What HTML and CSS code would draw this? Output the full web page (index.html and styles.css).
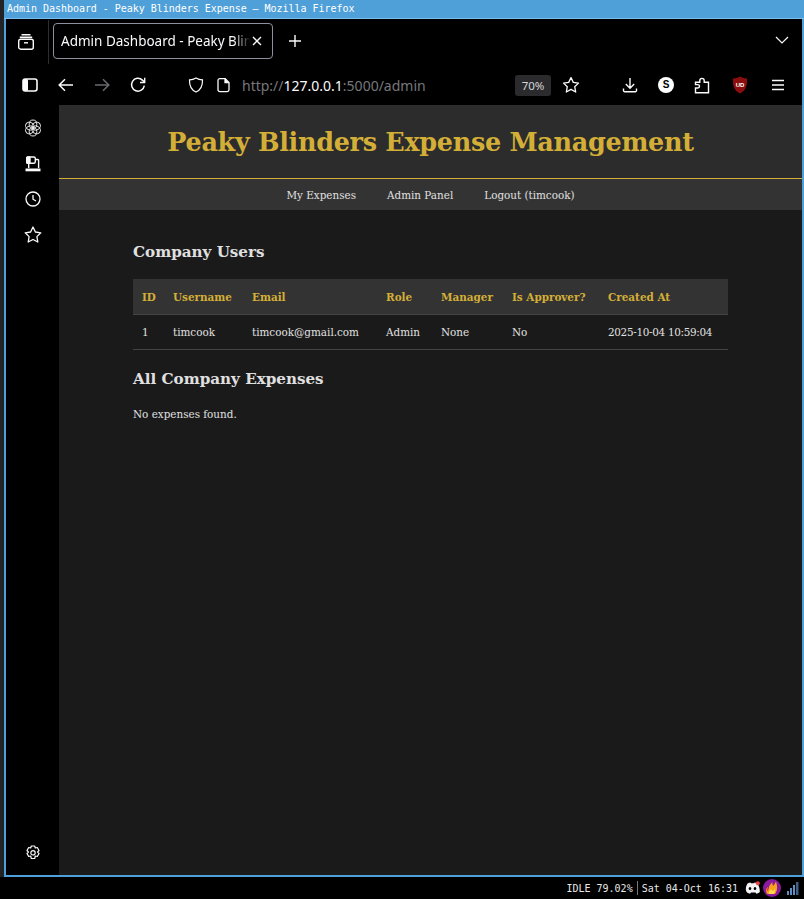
FILE: index.html
```html
<!DOCTYPE html>
<html lang="en">
<head>
    <meta charset="UTF-8">
    <meta name="viewport" content="width=device-width, initial-scale=1.0">
    <title>Admin Dashboard - Peaky Blinders Expense</title>
    <link rel="stylesheet" href="styles.css">
</head>
<body>
    <div class="window">
        <div class="titlebar">Admin Dashboard - Peaky Blinders Expense — Mozilla Firefox</div>

        <div class="tabstrip">
            <button class="tool tabs-btn">
                <svg width="18" height="18" viewBox="0 0 18 18" fill="none" stroke="#fbfbfe" stroke-width="1.4"><path d="M4.5 1.7h9M2.8 4.2h12.4"/><rect x="1.7" y="6.2" width="14.6" height="10" rx="2"/><path d="M7 9.8h4"/></svg>
            </button>
            <div class="tab-divider"></div>
            <div class="tab">
                <span class="tab-title">Admin Dashboard - Peaky Blin</span>
                <svg class="tab-close" width="10" height="10" viewBox="0 0 10 10" stroke="#fbfbfe" stroke-width="1.4"><path d="M1 1l8 8M9 1l-8 8"/></svg>
            </div>
            <svg class="new-tab" width="14" height="14" viewBox="0 0 14 14" stroke="#fbfbfe" stroke-width="1.4"><path d="M7 1v12M1 7h12"/></svg>
            <svg class="tab-list" width="14" height="8" viewBox="0 0 14 8" fill="none" stroke="#fbfbfe" stroke-width="1.2"><path d="M1 1l6 6 6-6"/></svg>
        </div>

        <div class="navbar">
            <button class="tool">
                <svg width="16" height="14" viewBox="0 0 16 14"><rect x="1" y="1" width="14" height="12" rx="2.2" fill="none" stroke="#fbfbfe" stroke-width="1.6"/><rect x="1" y="1" width="5" height="12" rx="1.5" fill="#fbfbfe"/></svg>
            </button>
            <button class="tool">
                <svg width="16" height="14" viewBox="0 0 16 14" fill="none" stroke="#fbfbfe" stroke-width="1.5"><path d="M15 7H1.5M7 1.2L1.2 7 7 12.8"/></svg>
            </button>
            <button class="tool">
                <svg width="16" height="14" viewBox="0 0 16 14" fill="none" stroke="#6b6b6f" stroke-width="1.5"><path d="M1 7h13.5M9 1.2L14.8 7 9 12.8"/></svg>
            </button>
            <button class="tool">
                <svg width="16" height="16" viewBox="0 0 16 16" fill="none" stroke="#fbfbfe" stroke-width="1.5"><path d="M14.3 8.6A6.4 6.4 0 1 1 12.4 3.1L14.4 5"/><path d="M14.7 .8v4.7h-4.7" stroke-width="1.4"/></svg>
            </button>
            <div class="urlbar">
                <svg class="url-icon" width="16" height="16" viewBox="0 0 16 16" fill="none" stroke="#fbfbfe" stroke-width="1.2"><path d="M8 1c2 1.2 4 1.8 6.5 1.9.2 5.800-1.500 9.800-6.500 12.100C3 12.700 1.300 8.700 1.500 2.900 4 2.800 6 2.200 8 1z"/></svg>
                <svg class="url-icon page-icon" width="14" height="16" viewBox="0 0 14 16" fill="none" stroke="#fbfbfe" stroke-width="1.3"><path d="M2.800 1.600h5.400l3.800 3.800v7.400a1.800 1.800 0 0 1-1.800 1.800H2.800A1.800 1.800 0 0 1 1 12.800V3.400a1.800 1.800 0 0 1 1.800-1.800z"/><path d="M8 1.600v4h4" fill="#fbfbfe"/></svg>
                <span class="url"><span class="url-dim">http://</span>127.0.0.1<span class="url-dim">:5000/admin</span></span>
                <span class="zoom-level">70%</span>
                <svg class="star" width="18" height="18" viewBox="0 0 18 18" fill="none" stroke="#fbfbfe" stroke-width="1.3" stroke-linejoin="round"><path d="M9 1.500l2.300 4.900 5.200.7-3.800 3.600 1 5.300L9 13.400 4.300 16l1-5.300L1.500 7.100l5.200-.7z"/></svg>
            </div>
            <button class="tool">
                <svg width="16" height="16" viewBox="0 0 16 16" fill="none" stroke="#fbfbfe" stroke-width="1.400"><path d="M8 1v10M3.800 7L8 11.200 12.200 7M1.500 11.500v2a1.200 1.200 0 0 0 1.200 1.200h10.600a1.200 1.200 0 0 0 1.200-1.200v-2"/></svg>
            </button>
            <button class="tool">
                <span class="ext-s">S</span>
            </button>
            <button class="tool">
                <svg width="16" height="17" viewBox="0 0 16 17" fill="none" stroke="#fbfbfe" stroke-width="1.400"><path d="M1.500 15.800V11h2.300a1.700 1.700 0 0 0 0-3.400H1.500V5.200h4.300V3.600a2.200 2.200 0 0 1 4.400 0v1.600h4.300v10.600z"/></svg>
            </button>
            <button class="tool ublock-btn">
                <svg width="16" height="18" viewBox="0 0 16 18"><path d="M8 .6c2 1.300 4.500 1.900 7 1.900.3 7-1 12-7 15-6-3-7.300-8-7-15 2.500 0 5-.6 7-1.900z" fill="#8b0d0d"/><text x="8" y="11" class="ublock-text">UD</text></svg>
            </button>
            <button class="tool menu-btn">
                <svg width="14" height="12" viewBox="0 0 14 12" stroke="#fbfbfe" stroke-width="1.300"><path d="M1 1.500h12M1 6h12M1 10.500h12"/></svg>
            </button>
        </div>

        <div class="browser-body">
            <aside class="sidebar">
                <svg class="side-icon" width="18" height="18" viewBox="0 0 18 18" fill="none" stroke="#e8e8ea" stroke-width="1">
                    <ellipse cx="9" cy="5.300" rx="3.800" ry="4.300"/>
                    <ellipse cx="9" cy="5.300" rx="3.800" ry="4.300" transform="rotate(60 9 9)"/>
                    <ellipse cx="9" cy="5.300" rx="3.800" ry="4.300" transform="rotate(120 9 9)"/>
                    <ellipse cx="9" cy="5.300" rx="3.800" ry="4.300" transform="rotate(180 9 9)"/>
                    <ellipse cx="9" cy="5.300" rx="3.800" ry="4.300" transform="rotate(240 9 9)"/>
                    <ellipse cx="9" cy="5.300" rx="3.800" ry="4.300" transform="rotate(300 9 9)"/>
                </svg>
                <svg class="side-icon" width="16" height="16" viewBox="0 0 16 16" fill="none" stroke="#fbfbfe" stroke-width="1.400"><rect x="1.700" y="1" width="8.600" height="6.300" rx="1.500"/><rect x="1.700" y="1" width="3.300" height="6.300" rx="1" fill="#fbfbfe"/><path d="M3.700 7.300v4.700M10.300 3.500h2.500a.8.800 0 0 1 .8.800V12"/><path d="M.5 12.500h15v2.800H.5z" fill="#fbfbfe" stroke="none"/></svg>
                <svg class="side-icon" width="16" height="16" viewBox="0 0 16 16" fill="none" stroke="#fbfbfe" stroke-width="1.300"><circle cx="8" cy="8" r="7"/><path d="M8 4v4.200l3 1.800"/></svg>
                <svg class="side-icon" width="18" height="17" viewBox="0 0 18 17" fill="none" stroke="#fbfbfe" stroke-width="1.300" stroke-linejoin="round"><path d="M9 1l2.400 5 5.400.8-3.900 3.800.9 5.400L9 13.500 4.200 16l.9-5.400L1.200 6.800 6.600 6z"/></svg>
                <svg class="side-icon gear" width="16" height="16" viewBox="0 0 16 16" fill="none" stroke="#fbfbfe" stroke-width="1.200" stroke-linejoin="round"><path d="M6.300 1h3.400l.6 2 2-.5 1.700 3-1.400 1.500 1.400 1.500-1.700 3-2-.5-.6 2.500H6.300l-.6-2.500-2 .5-1.700-3L3.400 7 2 5.500l1.700-3 2 .5z"/><circle cx="8" cy="7.800" r="2.200"/></svg>
            </aside>

            <main class="page">
                <header class="page-header">
                    <h1>Peaky Blinders Expense Management</h1>
                </header>
                <nav class="page-nav">
                    <a href="#">My Expenses</a>
                    <a href="#">Admin Panel</a>
                    <a href="#">Logout (timcook)</a>
                </nav>
                <div class="container">
                    <h2>Company Users</h2>
                    <table>
                        <colgroup>
                            <col class="col-id"><col class="col-user"><col class="col-email"><col class="col-role"><col class="col-manager"><col class="col-approver"><col class="col-created">
                        </colgroup>
                        <thead>
                            <tr>
                                <th>ID</th><th>Username</th><th>Email</th><th>Role</th><th>Manager</th><th>Is Approver?</th><th>Created At</th>
                            </tr>
                        </thead>
                        <tbody>
                            <tr>
                                <td>1</td><td>timcook</td><td>timcook@gmail.com</td><td>Admin</td><td>None</td><td>No</td><td class="date">2025-10-04 10:59:04</td>
                            </tr>
                        </tbody>
                    </table>
                    <h2 class="second">All Company Expenses</h2>
                    <p>No expenses found.</p>
                </div>
            </main>
        </div>
    </div>

    <footer class="statusbar">
        <span>IDLE 79.02%</span>
        <span class="status-sep"></span>
        <span>Sat 04-Oct 16:31</span>
        <svg class="tray-discord" width="17" height="14" viewBox="0 0 17 14"><path d="M3.500 2.500C5 1.700 6 1.500 6.500 1.500l.3.700h3.400l.3-.7c.5 0 1.500.2 3 1 1.500 2.500 2.500 5.500 2.300 8.500-1.200 1-2.500 1.500-3.500 1.700l-.8-1.200-4.500 0-.9 1.200c-1-.2-2.300-.7-3.500-1.700C1 8 2 5 3.500 2.500z" fill="#f4f4f6"/><ellipse cx="6" cy="7.500" rx="1.300" ry="1.500" fill="#000"/><ellipse cx="11" cy="7.500" rx="1.300" ry="1.500" fill="#000"/><circle cx="13.800" cy="2.200" r="2" fill="#ee4444"/></svg>
        <svg class="tray-flame" width="18" height="18" viewBox="0 0 18 18"><circle cx="9" cy="9" r="9" fill="#8a1aa0"/><path d="M4.500 15c-2.500-3-1-5.500 0-7 .2 1.300.6 1.800 1.200 2C5.500 7 7.500 5 9.500 3c-.4 2 0 3 .8 3.700.8-1 1.800-2.400 2.700-4.200.8 3 2.500 8-1 12.500z" fill="#f7a21b"/><path d="M6 15c-1-2.200.8-3.500 2-5 .2 1.200 1 1.800 2 2 .8-.8 1.500-1.500 2-3 .5 2.500 0 4.500-1.500 6z" fill="#ffd84a"/><path d="M3.500 11c.2-1 .5-2 1-3 .2 1.300.6 1.800 1.200 2L5 12.500z" fill="#e8432e"/></svg>
        <svg class="tray-signal" width="12" height="13" viewBox="0 0 12 13" fill="#5f8fc4"><rect x="0" y="9" width="2" height="4"/><rect x="3" y="6" width="2" height="7"/><rect x="6" y="3" width="2" height="10"/><rect x="9" y="0" width="2.500" height="13" fill="#3f5f86"/></svg>
    </footer>
</body>
</html>
```

FILE: styles.css
```css
* {
    box-sizing: border-box;
}
html, body {
    margin: 0;
    height: 899px;
    overflow: hidden;
    background-color: #000;
}
body {
    width: 804px;
    display: flex;
    flex-direction: column;
    background: linear-gradient(#232326 877px, #000 877px);
    padding-left: 4px;
}
.window {
    height: 877px;
    display: flex;
    flex-direction: column;
    background-color: #000;
    border: 2px solid #4f9fd8;
    border-top: none;
}
.titlebar {
    height: 19px;
    margin: 0 -2px;
    padding: 1px 0 0 3px;
    background-color: #4f9fd8;
    border-bottom: 1px solid #7cc0f0;
    color: #fff;
    font-family: "DejaVu Sans Mono", monospace;
    font-size: 10px;
    letter-spacing: -0.03px;
    line-height: 15px;
    white-space: nowrap;
}

/* browser chrome */
.tabstrip {
    height: 46px;
    display: flex;
    align-items: center;
    color: #fbfbfe;
}
.tool {
    width: 36px;
    height: 40px;
    padding: 0;
    border: none;
    background: none;
    display: flex;
    align-items: center;
    justify-content: center;
    flex-shrink: 0;
}
.tabs-btn {
    margin-left: 2px;
}
.tab-divider {
    width: 1px;
    height: 44px;
    margin: 0 4px;
    background-color: #2e2e30;
}
.tab {
    width: 220px;
    height: 36px;
    margin-top: -3px;
    padding: 0 10px 0 7px;
    display: flex;
    align-items: center;
    border: 1px solid #8f8f9d;
    border-radius: 4px;
    font-family: "Noto Sans", sans-serif;
    font-size: 13.500px;
}
.tab-title {
    white-space: nowrap;
    -webkit-mask-image: linear-gradient(to right, #000 172px, transparent 190px);
    mask-image: linear-gradient(to right, #000 172px, transparent 190px);
}
.tab-close {
    margin-left: auto;
    flex-shrink: 0;
}
.new-tab {
    margin-left: 15px;
    margin-top: -3px;
}
.tab-list {
    margin-left: auto;
    margin-right: 13px;
    margin-top: -4px;
}
.navbar {
    height: 40px;
    display: flex;
    align-items: center;
    padding-left: 6px;
}
.urlbar {
    width: 456px;
    display: flex;
    align-items: center;
    font-family: "Noto Sans", sans-serif;
}
.url-icon {
    flex-shrink: 0;
    margin-left: 32px;
}
.page-icon {
    margin-left: 13px;
}
.url {
    margin-left: 11px;
    font-size: 14px;
    color: #fbfbfe;
    white-space: nowrap;
}
.url-dim {
    color: #77777b;
}
.zoom-level {
    margin-left: auto;
    width: 36px;
    height: 21px;
    background-color: #2b2b2e;
    border-radius: 3px;
    color: #d5d5d8;
    font-size: 11.500px;
    line-height: 21px;
    text-align: center;
}
.star {
    margin: 0 32px 0 11px;
    flex-shrink: 0;
}
.ublock-btn {
    margin-left: 2px;
}
.menu-btn {
    margin-left: 2px;
}
.ext-s {
    width: 16px;
    height: 16px;
    border-radius: 50%;
    background-color: #fff;
    color: #000;
    font-family: "Liberation Sans", sans-serif;
    font-size: 10px;
    font-weight: bold;
    line-height: 16px;
    text-align: center;
}
.ublock-text {
    fill: #fff;
    font-family: "Liberation Sans", sans-serif;
    font-size: 6px;
    font-weight: bold;
    text-anchor: middle;
}

/* sidebar */
.browser-body {
    flex: 1;
    display: flex;
    min-height: 0;
}
.sidebar {
    width: 53px;
    flex-shrink: 0;
    display: flex;
    flex-direction: column;
    align-items: center;
    padding: 14px 0 0 1px;
    gap: 19px;
}
.gear {
    margin-top: auto;
    margin-bottom: 14px;
}

/* page */
.page {
    flex: 1;
    background-color: #1a1a1a;
    color: #e0e0e0;
    font-family: "DejaVu Serif", serif;
}
.page-header {
    height: 74px;
    background-color: #2c2c2c;
    border-bottom: 1px solid #d4af37;
    display: flex;
    align-items: center;
    justify-content: center;
}
h1 {
    margin: 0;
    color: #d4af37;
    font-size: 25.500px;
    font-weight: bold;
    letter-spacing: -0.32px;
}
.page-nav {
    height: 31px;
    background-color: #333;
    display: flex;
    align-items: center;
    justify-content: center;
    gap: 31px;
}
.page-nav a {
    color: #e0e0e0;
    font-size: 10.400px;
    text-decoration: none;
}
.container {
    padding: 32px 74px 0;
}
h2 {
    margin: 0 0 16px;
    font-size: 15.150px;
    line-height: 21px;
    font-weight: bold;
}
h2.second {
    margin-top: 19px;
    margin-bottom: 18px;
}
table {
    width: 595px;
    table-layout: fixed;
    border-collapse: collapse;
    font-size: 10.400px;
}
.col-id { width: 31px; }
.col-user { width: 79px; }
.col-email { width: 134px; }
.col-role { width: 55px; }
.col-manager { width: 71px; }
.col-approver { width: 96px; }
th, td {
    padding: 0 0 0 9px;
    text-align: left;
    white-space: nowrap;
}
th {
    height: 35px;
    padding-top: 1px;
    background-color: #333;
    color: #d4af37;
    font-weight: bold;
    border-bottom: 1px solid #444;
}
td {
    height: 35px;
    border-bottom: 1px solid #444;
}
td.date {
    letter-spacing: -0.3px;
}
p {
    margin: 0;
    font-size: 10.400px;
}

/* desktop status bar */
.statusbar {
    height: 22px;
    display: flex;
    align-items: center;
    justify-content: flex-end;
    margin-left: -4px;
    padding-right: 5px;
    background-color: #000;
    color: #e8e8e8;
    font-family: "DejaVu Sans Mono", monospace;
    font-size: 10px;
}
.status-sep {
    width: 1px;
    height: 14px;
    margin: 0 4px;
    background-color: #777;
}
.tray-discord {
    margin-left: 6px;
}
.tray-flame {
    margin-left: 2px;
}
.tray-signal {
    margin-left: 6px;
}
```
